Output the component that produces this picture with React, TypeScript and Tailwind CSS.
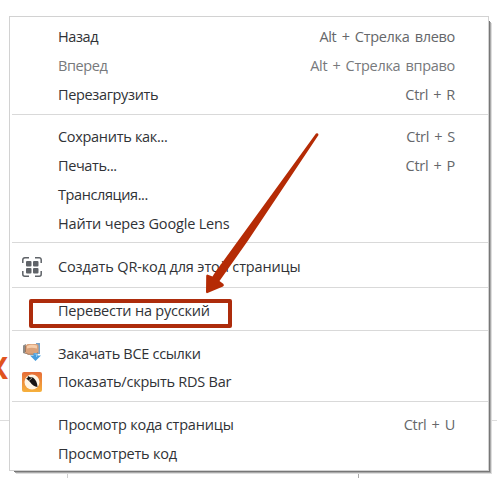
import clsx from "clsx";

type Item = {
  label: string;
  shortcut?: string;
  disabled?: boolean;
  highlighted?: boolean;
  icon?: "qr" | "download" | "rds";
  tracking?: string;
};

type Group = {
  className: string;
  rowClassName?: string;
  items: Item[];
};

const groups: Group[] = [
  {
    className: "h-[97px] pt-[5px]",
    items: [
      { label: "Назад", shortcut: "Alt + Стрелка влево", tracking: "tracking-[-0.4px]" },
      { label: "Вперед", shortcut: "Alt + Стрелка вправо", disabled: true, tracking: "tracking-[-0.4px]" },
      { label: "Перезагрузить", shortcut: "Ctrl + R", tracking: "tracking-[-0.35px]" },
    ],
  },
  {
    className: "h-[128px] border-t pt-[7px]",
    items: [
      { label: "Сохранить как...", shortcut: "Ctrl + S", tracking: "tracking-[-0.3px]" },
      { label: "Печать...", shortcut: "Ctrl + P", tracking: "tracking-[-0.4px]" },
      { label: "Трансляция...", tracking: "tracking-[-0.4px]" },
      { label: "Найти через Google Lens", tracking: "tracking-[-0.17px]" },
    ],
  },
  {
    className: "h-[45px] border-t pt-[9px]",
    items: [{ label: "Создать QR-код для этой страницы", icon: "qr", tracking: "tracking-[-0.14px]" }],
  },
  {
    className: "h-[43px] border-t pt-2",
    items: [{ label: "Перевести на русский", highlighted: true, tracking: "tracking-[-0.2px]" }],
  },
  {
    className: "h-[71px] border-t pt-[9px]",
    rowClassName: "h-7",
    items: [
      { label: "Закачать ВСЕ ссылки", icon: "download", tracking: "tracking-[-0.3px]" },
      { label: "Показать/скрыть RDS Bar", icon: "rds" },
    ],
  },
  {
    className: "h-[69px] border-t pt-2",
    items: [
      { label: "Просмотр кода страницы", shortcut: "Ctrl + U", tracking: "tracking-[-0.18px]" },
      { label: "Просмотреть код", tracking: "tracking-[-0.2px]" },
    ],
  },
];

function QrIcon() {
  return (
    <svg className="h-5 w-5" viewBox="0 0 20 20" fill="none" aria-hidden>
      <path
        d="M.8 6V2.800a2 2 0 0 1 2-2H7M13 .8h4.200a2 2 0 0 1 2 2V6M19.200 14v3.200a2 2 0 0 1-2 2H13M7 19.200H2.800a2 2 0 0 1-2-2V14"
        stroke="#5f6368"
        strokeWidth="1.500"
      />
      <g fill="#5f6368">
        <rect x="4" y="4" width="5.500" height="5.500" rx="1" />
        <rect x="11" y="4" width="5.500" height="5.500" rx="1" />
        <rect x="4" y="11" width="5.500" height="5.500" rx="1" />
        <rect x="11" y="11" width="5.500" height="5.500" rx="1" />
      </g>
    </svg>
  );
}

function DownloadIcon() {
  return (
    <svg className="-mt-1 h-5 w-5" viewBox="0 0 20 20" aria-hidden>
      <path d="M1 3.500 4 2v10l-3-1Z" fill="#8c8b88" />
      <path d="M14 1h4v11h-4z" fill="#79a3c8" />
      <path d="M3 4 5.500 2H15l1.500 1.500V11L15 12.500H6L3 11Z" fill="#dba27a" />
      <path d="M5 4c3-1.500 6-1.500 10-.5v3c-4-1-7-1-10 0Z" fill="#f6cdaa" />
      <path d="m4 11 2 1.300h8l2-1.800M3.500 4v6" stroke="#8f6b55" strokeWidth="0.800" fill="none" />
      <path d="M11.500 11h4v2.500H19L13.500 19 8 13.500h3.500Z" fill="#479ddd" />
      <path d="M12.500 12h2v3" stroke="#8ac7ef" fill="none" />
    </svg>
  );
}

function RdsIcon() {
  return (
    <svg className="h-5 w-5" viewBox="0 0 20 20" aria-hidden>
      <defs>
        <linearGradient id="rds" x1="0" y1="0" x2="0" y2="1">
          <stop stopColor="#e66d38" />
          <stop offset="1" stopColor="#f6b13c" />
        </linearGradient>
      </defs>
      <rect width="20" height="20" rx="2" fill="url(#rds)" />
      <circle cx="10" cy="10" r="7.500" fill="#fff5e4" />
      <path
        d="M4 6.500 5.500 6 6 4l2 1.300 3 .2c2.500 2 4.500 5 4.500 9.500-3-.2-5.500-2-7.500-5L6 8Z"
        fill="#171514"
      />
      <path d="m7 8.500 3-2.500" stroke="#fff5e4" strokeWidth="0.600" />
    </svg>
  );
}

function MenuRow({ item, className = "h-[29px]" }: { item: Item; className?: string }) {
  return (
    <div
      role="menuitem"
      aria-disabled={item.disabled}
      className={clsx(
        "flex items-center pr-[33px] whitespace-pre",
        className,
        item.disabled ? "text-[#77797c]" : "text-[#303236]",
      )}
    >
      <span className="flex w-[46px] shrink-0 pl-[10px]">
        {item.icon === "qr" && <QrIcon />}
        {item.icon === "download" && <DownloadIcon />}
        {item.icon === "rds" && <RdsIcon />}
      </span>
      <span className={clsx("relative", item.tracking ?? "tracking-[-0.24px]")}>
        {item.label}
        {item.highlighted && (
          <span className="absolute -top-[2px] -left-[29px] h-[29px] w-[203px] rounded-[2px] border-4 border-[#ad2c0c]" />
        )}
      </span>
      {item.shortcut && (
        <span
          className={clsx(
            "ml-auto tracking-[-0.3px] [word-spacing:1.7px]",
            item.disabled ? "text-[#77797c]" : "text-[#65676a]",
          )}
        >
          {item.shortcut}
        </span>
      )}
    </div>
  );
}

function PageBehind() {
  return (
    <div className="absolute inset-0 flex flex-col">
      <div className="flex h-[420px] items-end pb-[38px]">
        <span className="-ml-[12px] text-[30px] leading-7 font-bold text-[#e0531f]">X</span>
      </div>
      <div className="flex flex-1 border-t border-[#dddddd]">
        <div className="w-[68px] border-r border-[#cfcfcf]" />
        <div className="w-[291px] border-r border-[#aaaaaa]" />
      </div>
    </div>
  );
}

export default function App() {
  return (
    <main className="relative h-[478px] w-[497px] overflow-hidden bg-white pt-4 pl-[9px] font-['Open_Sans',sans-serif] text-[14.5px] leading-5">
      <PageBehind />

      <div
        role="menu"
        className="relative h-[455px] w-[480px] border border-[#d2d2d2] bg-white pl-[2px] shadow-[3px_3px_0_-2px_#777777,4px_4px_0_-2px_#aaaaaa,5px_5px_0_-2px_#dedede]"
      >
        {groups.map((group, i) => (
          <div key={i} className={clsx("border-[#d9d9d9]", group.className)}>
            {group.items.map((item) => (
              <MenuRow key={item.label} item={item} className={group.rowClassName} />
            ))}
          </div>
        ))}
      </div>

      {/* Arrow pointing at the highlighted item */}
      <svg className="absolute inset-0 h-full w-full" viewBox="0 0 497 478" aria-hidden>
        <path
          d="M316 133.500 215 272.500l-2.500 4-5.300-2q-1 0-1 1.500l-.2 16q.2 1.500 1.500 1l15.500-6.500q1.500-1 .5-2.500l-4-3L247.700 241 318.500 135q0-2.500-2.500-1.500Z"
          fill="#b52b05"
        />
      </svg>
    </main>
  );
}
